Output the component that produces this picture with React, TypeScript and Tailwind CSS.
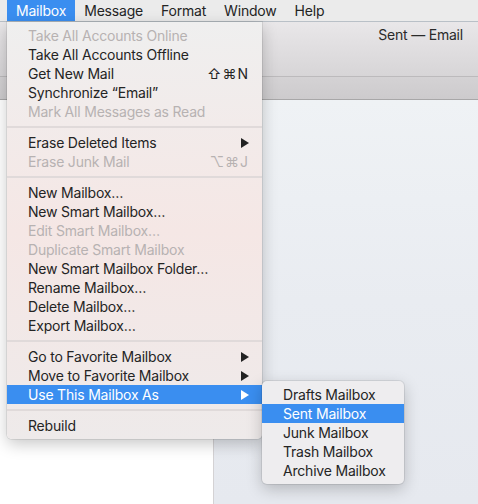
import React from 'react';

type Row =
  | { kind: 'sep' }
  | { kind: 'item'; label: string; off?: boolean; keys?: string; sub?: boolean; on?: boolean };

const item = (label: string, extra: Partial<Omit<Extract<Row, { kind: 'item' }>, 'kind' | 'label'>> = {}): Row => ({
  kind: 'item',
  label,
  ...extra,
});
const sep: Row = { kind: 'sep' };

const mailboxMenu: Row[] = [
  item('Take All Accounts Online', { off: true }),
  item('Take All Accounts Offline'),
  item('Get New Mail', { keys: '⇧⌘N' }),
  item('Synchronize “Email”'),
  item('Mark All Messages as Read', { off: true }),
  sep,
  item('Erase Deleted Items', { sub: true }),
  item('Erase Junk Mail', { off: true, keys: '⌥⌘J' }),
  sep,
  item('New Mailbox…'),
  item('New Smart Mailbox…'),
  item('Edit Smart Mailbox…', { off: true }),
  item('Duplicate Smart Mailbox', { off: true }),
  item('New Smart Mailbox Folder…'),
  item('Rename Mailbox…'),
  item('Delete Mailbox…'),
  item('Export Mailbox…'),
  sep,
  item('Go to Favorite Mailbox', { sub: true }),
  item('Move to Favorite Mailbox', { sub: true }),
  item('Use This Mailbox As', { sub: true, on: true }),
  sep,
  item('Rebuild'),
];

const useAsMenu: Row[] = [
  item('Drafts Mailbox'),
  item('Sent Mailbox', { on: true }),
  item('Junk Mailbox'),
  item('Trash Mailbox'),
  item('Archive Mailbox'),
];

function Arrow({ on }: { on?: boolean }) {
  return (
    <svg width="8" height="10" viewBox="0 0 8 10" className={on ? 'fill-white' : 'fill-[#222]'}>
      <path d="M0 0 L8 5 L0 10 Z" />
    </svg>
  );
}

function MenuRows({ rows }: { rows: Row[] }) {
  return (
    <>
      {rows.map((r, i) =>
        r.kind === 'sep' ? (
          <div key={i} className="h-[12px] flex items-center">
            <div className="h-[2px] w-full bg-[#e0dada]" />
          </div>
        ) : (
          <div
            key={i}
            className={
              'h-[19px] flex items-center justify-between pl-[21px] pr-[13px] ' +
              (r.on ? 'bg-[#3a8ef0] text-white' : r.off ? 'text-[#b7b2b2]' : 'text-[#242424]')
            }
          >
            <span>{r.label}</span>
            {r.keys && <span className="tracking-[1px]">{r.keys}</span>}
            {r.sub && <Arrow on={r.on} />}
          </div>
        ),
      )}
    </>
  );
}

export default function App() {
  return (
    <div className="relative w-[478px] h-[504px] overflow-hidden flex flex-col bg-white font-['Inter',sans-serif] text-[14px] leading-none tracking-[-0.2px] text-[#242424]">
      {/* menu bar */}
      <div className="h-[22px] shrink-0 flex items-stretch pl-[7px] bg-[#ebebeb] border-b border-[#b9c0c7]">
        {['Mailbox', 'Message', 'Format', 'Window', 'Help'].map((m, i) => (
          <div
            key={m}
            className={'px-[9px] flex items-center ' + (i === 0 ? 'bg-[#3a8ef0] text-white' : '')}
          >
            {m}
          </div>
        ))}
      </div>

      {/* window behind */}
      <div className="h-[55px] shrink-0 flex justify-end pr-[15px] pt-[6px] bg-gradient-to-b from-[#e9e7e9] to-[#d7d5d7] border-b border-[#bcbabc]">
        <span className="text-[#2a2a2a]">Sent — Email</span>
      </div>
      <div className="h-[23px] shrink-0 bg-gradient-to-b from-[#d4d2d4] to-[#cdcbcd] border-b border-[#a8a7a8]" />
      <div className="flex-1 flex">
        <div className="w-[214px] shrink-0 bg-white border-r border-[#d4d2d4]" />
        <div className="flex-1 bg-gradient-to-b from-[#eff2f5] via-[#e9ecf1] to-[#e6e9ef]" />
      </div>

      {/* Mailbox menu */}
      <div className="absolute left-[7px] top-[22px] w-[255px] py-[4px] rounded-b-[5px] bg-gradient-to-b from-[#efefef] via-[#f5e7e5] to-[#eeeaea] shadow-[0_5px_16px_rgba(0,0,0,0.22),0_0_0_1px_rgba(0,0,0,0.08)]">
        <MenuRows rows={mailboxMenu} />
      </div>

      {/* Use This Mailbox As submenu */}
      <div className="absolute left-[262px] top-[381px] w-[142px] py-[4px] rounded-[5px] bg-[#eeedef] shadow-[0_5px_16px_rgba(0,0,0,0.22),0_0_0_1px_rgba(0,0,0,0.08)]">
        <MenuRows rows={useAsMenu} />
      </div>
    </div>
  );
}
